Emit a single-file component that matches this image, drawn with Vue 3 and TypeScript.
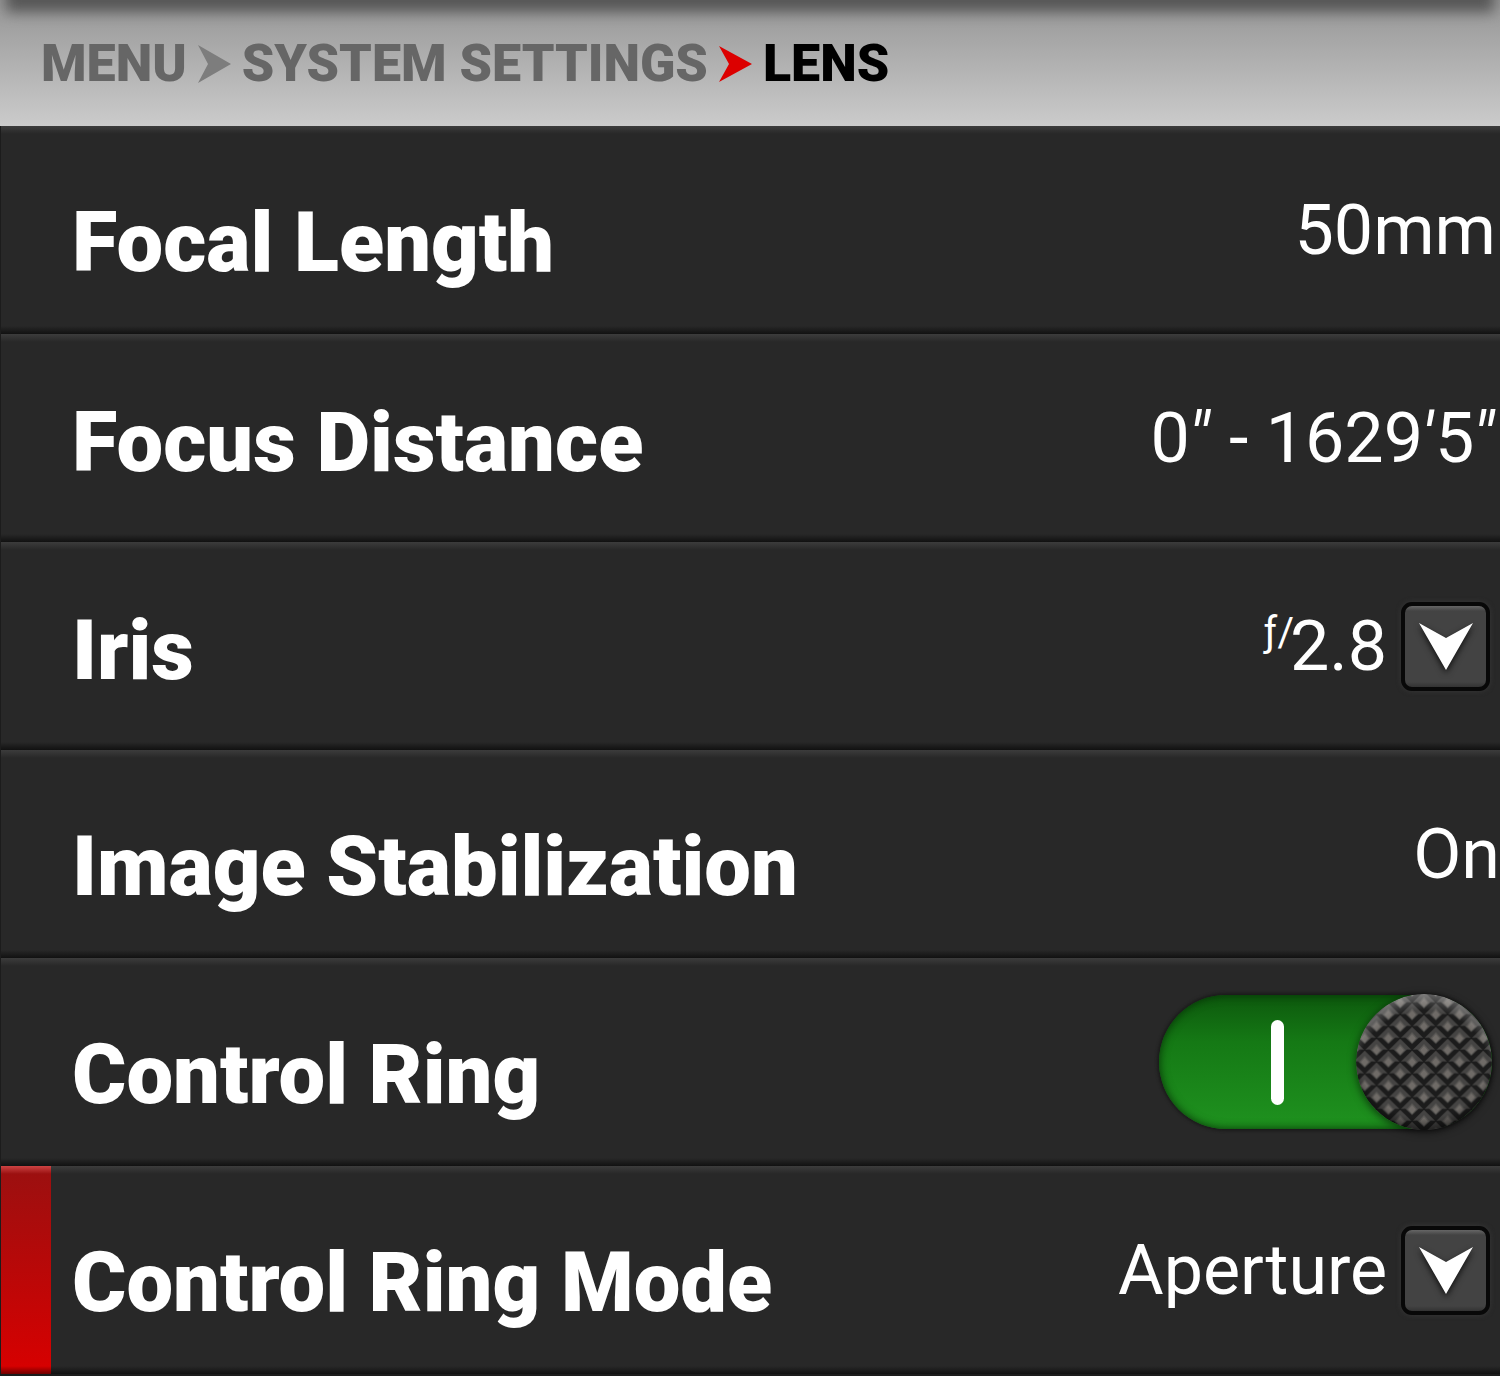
<script setup lang="ts">
import { ref } from 'vue'

interface Part {
  text: string
  mark?: boolean
}

interface Setting {
  id: string
  label: string
  kind: 'text' | 'select' | 'toggle'
  value: Part[]
  prefix?: string
  raised?: boolean
  active?: boolean
}

const settings: Setting[] = [
  { id: 'focal-length', label: 'Focal Length', kind: 'text', value: [{ text: '50mm' }] },
  {
    id: 'focus-distance',
    label: 'Focus Distance',
    kind: 'text',
    value: [
      { text: '0' },
      { text: '″', mark: true },
      { text: ' - 1629' },
      { text: '′', mark: true },
      { text: '5' },
      { text: '″', mark: true },
    ],
    raised: true,
  },
  { id: 'iris', label: 'Iris', kind: 'select', value: [{ text: '2.8' }], prefix: 'ƒ/', raised: true },
  { id: 'stabilization', label: 'Image Stabilization', kind: 'text', value: [{ text: 'On' }] },
  { id: 'control-ring', label: 'Control Ring', kind: 'toggle', value: [] },
  { id: 'ring-mode', label: 'Control Ring Mode', kind: 'select', value: [{ text: 'Aperture' }], active: true },
]

const ringOn = ref(true)
</script>

<template>
  <div class="screen">
    <nav class="crumbs" aria-label="Breadcrumb">
      <a href="#menu" class="crumb">MENU</a>
      <svg class="sep" viewBox="0 0 33 38" aria-hidden="true"><path d="M0 0 33 19 0 38 10 19Z" fill="#7d7d7d" /></svg>
      <a href="#system" class="crumb">SYSTEM SETTINGS</a>
      <svg class="sep" viewBox="0 0 33 38" aria-hidden="true"><path d="M0 1 33 19 0 37 10 19Z" fill="#dc0000" /></svg>
      <span class="crumb current" aria-current="page">LENS</span>
    </nav>

    <main class="rows">
      <div v-for="s in settings" :key="s.id" class="row" :class="{ active: s.active }">
        <label v-if="s.kind !== 'text'" class="name" :class="{ raised: s.raised }" :for="s.id">{{ s.label }}</label>
        <span v-else class="name" :class="{ raised: s.raised }">{{ s.label }}</span>

        <span v-if="s.kind === 'text'" class="value" :class="{ flush: s.id === 'stabilization' }"><span v-for="(p, i) in s.value" :key="i" :class="{ mark: p.mark }">{{ p.text }}</span></span>

        <div v-else-if="s.kind === 'select'" class="picker">
          <span v-if="s.prefix" class="prefix">{{ s.prefix }}</span>
          <select :id="s.id" class="value choice">
            <option v-for="p in s.value" :key="p.text">{{ p.text }}</option>
          </select>
          <span class="arrow" aria-hidden="true">
            <svg viewBox="0 0 54 47"><path d="M0 0 27 15 54 0 27 47Z" fill="#fff" /></svg>
          </span>
        </div>

        <div v-else class="toggle" :class="{ off: !ringOn }">
          <input :id="s.id" v-model="ringOn" type="checkbox" role="switch" class="track" />
          <span class="bar"></span>
          <svg class="knob" viewBox="0 0 136 136" aria-hidden="true">
            <defs>
              <pattern id="stud" width="23.7" height="23.7" patternUnits="userSpaceOnUse" x="56.1" y="45.1">
                <rect width="23.7" height="23.7" fill="#1c1c1c" />
                <g id="pyramid">
                  <path d="M11.85 -.3 22.9 10.6 18.6 10.4 11.85 16.8 5.1 10.4 .8 10.6Z" fill="#454443" />
                  <path d="M11.85 5 17 10.8 11.85 16 6.7 10.8Z" fill="#5a5855" />
                  <path d="M11.85 7 15.6 11.2 11.85 15.2 8.1 11.2Z" fill="#6f6b67" />
                </g>
                <use href="#pyramid" x="-11.85" y="-11.85" />
                <use href="#pyramid" x="11.85" y="-11.85" />
                <use href="#pyramid" x="-11.85" y="11.85" />
                <use href="#pyramid" x="11.85" y="11.85" />
              </pattern>
              <radialGradient id="sheen" cx=".5" cy=".62" r=".64">
                <stop offset=".78" stop-color="#fff" stop-opacity="0" />
                <stop offset="1" stop-color="#fff" stop-opacity=".35" />
              </radialGradient>
              <radialGradient id="shade" cx=".5" cy=".42" r=".58">
                <stop offset=".85" stop-color="#000" stop-opacity="0" />
                <stop offset="1" stop-color="#000" stop-opacity=".5" />
              </radialGradient>
            </defs>
            <circle cx="68" cy="68" r="68" fill="url(#stud)" />
            <circle cx="68" cy="68" r="68" fill="url(#sheen)" />
            <circle cx="68" cy="68" r="68" fill="url(#shade)" />
          </svg>
        </div>
      </div>
    </main>
  </div>
</template>

<style>
body {
  margin: 0;
  background: #fff;
}
</style>

<style scoped>
.screen {
  font-family: Roboto, "Liberation Sans", sans-serif;
  color: #fff;
}
.crumbs {
  display: flex;
  align-items: center;
  gap: 11px;
  position: relative;
  overflow: hidden;
  box-sizing: border-box;
  height: 126px;
  padding: 1px 41px 0;
  background: linear-gradient(#969696, #cbcbcb);
}
.crumbs::before {
  content: "";
  position: absolute;
  top: -30px;
  left: 6px;
  right: 6px;
  height: 42px;
  background: #565656;
  filter: blur(7px);
}
.crumb {
  color: #666;
  font-size: 52px;
  font-weight: 900;
  line-height: 64px;
  text-decoration: none;
}
.current {
  color: #000;
}
.sep {
  width: 33px;
  height: 38px;
}
.rows {
  border-bottom: 2px solid #1c1c1c;
}
.row {
  display: flex;
  align-items: center;
  justify-content: space-between;
  box-sizing: border-box;
  height: 208px;
  padding-left: 71px;
  background:
    linear-gradient(#3c3c3c, #282828) top / 100% 8px no-repeat,
    linear-gradient(#282828, #111) bottom / 100% 8px no-repeat,
    #282828;
  border-left: 1px solid #1c1c1c;
}
.active {
  background:
    linear-gradient(#c44, #9a1010) left top / 50px 8px no-repeat,
    linear-gradient(#d80000, #700000) left bottom / 50px 8px no-repeat,
    linear-gradient(#9a1010, #d80000) left / 50px 100% no-repeat,
    linear-gradient(#3c3c3c, #282828) top / 100% 8px no-repeat,
    linear-gradient(#282828, #111) bottom / 100% 8px no-repeat,
    #282828;
}
.name {
  padding-top: 25px;
  font-size: 83px;
  font-weight: 900;
  line-height: 96px;
}
.raised {
  padding-top: 9px;
}
.value {
  padding-right: 4px;
  font-size: 70px;
  line-height: 80px;
  white-space: pre;
}
.flush {
  padding-right: 0;
}
.mark {
  margin: 0 2px 0 -2px;
  font-style: italic;
}
.picker {
  display: flex;
  align-items: center;
  position: relative;
  padding-right: 10px;
}
.choice {
  appearance: none;
  margin: 0;
  padding: 0 102px 0 0;
  border: 0;
  background: none;
  color: #fff;
  font-family: inherit;
}
.prefix {
  margin-right: -4px;
  padding-bottom: 26px;
  font-size: 40px;
  line-height: 48px;
}
.arrow {
  display: flex;
  align-items: center;
  justify-content: center;
  box-sizing: border-box;
  position: absolute;
  right: 10px;
  width: 89px;
  height: 89px;
  border: 4px solid #080808;
  border-radius: 11px;
  background: linear-gradient(#666, #434343 5px, #434343 76px, #333);
  box-shadow: 0 0 4px 1px #333;
  pointer-events: none;
}
.arrow svg {
  width: 54px;
  height: 47px;
  filter: drop-shadow(0 3px 3px #111);
}
.toggle {
  display: flex;
  align-items: center;
  position: relative;
  margin-right: 8px;
}
.track {
  appearance: none;
  width: 333px;
  height: 134px;
  margin: 0;
  border-radius: 67px;
  background: linear-gradient(#0d590d, #157915 35%, #1f921f);
  box-shadow: inset 0 0 10px #063006, 0 0 3px 2px #1b1b1b;
}
.bar {
  position: absolute;
  left: 112px;
  width: 13px;
  height: 85px;
  border-radius: 7px;
  background: #fff;
  pointer-events: none;
}
.knob {
  position: absolute;
  right: 0;
  width: 136px;
  height: 136px;
  border-radius: 50%;
  box-shadow: 0 2px 8px #0009;
  pointer-events: none;
}
.off .track {
  background: #333;
}
.off .knob {
  right: auto;
  left: 0;
}
.off .bar {
  left: 208px;
}
</style>
